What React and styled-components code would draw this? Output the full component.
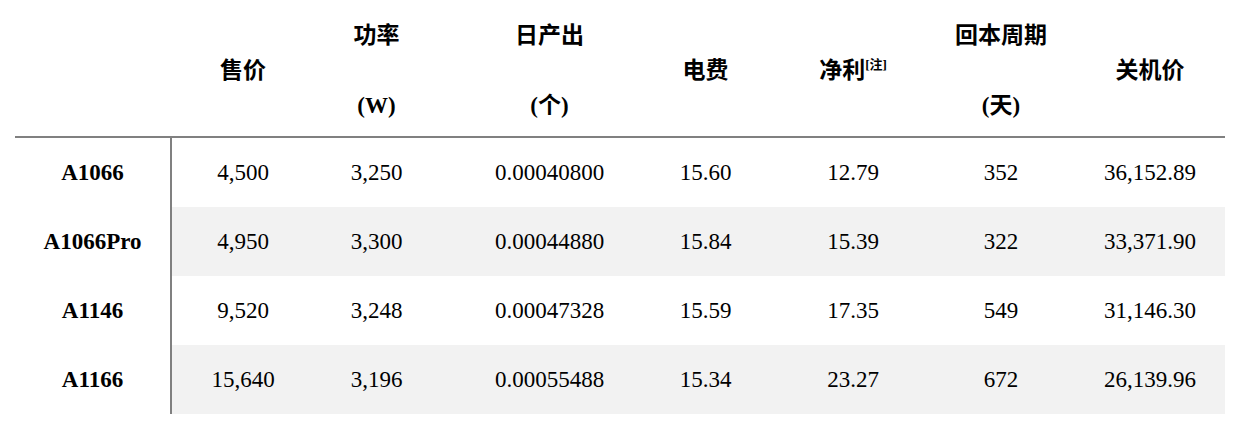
import React from 'react';
import styled, { createGlobalStyle } from 'styled-components';

const GlobalStyle = createGlobalStyle`
  body {
    margin: 0;
    background: #fff;
    font-family: "Liberation Serif", "Noto Sans CJK SC", serif;
    color: #000;
  }
`;

// column widths, and how far the text sits off the column centre
const columns = [
  { w: 157, shift: 0 },
  { w: 138, shift: 2 },
  { w: 153, shift: -10 },
  { w: 165, shift: 4 },
  { w: 151, shift: 2 },
  { w: 148, shift: 0 },
  { w: 148, shift: 0 },
  { w: 150, shift: 0 },
];

const template = columns.map(c => `${c.w}px`).join(' ');

const Table = styled.div`
  width: 1210px;
  margin-left: 15px;
`;

const HeaderRow = styled.div`
  display: grid;
  grid-template-columns: ${template};
  height: 136px;
  border-bottom: 2px solid #808080;
`;

const HeadCell = styled.div`
  display: flex;
  flex-direction: column;
  align-items: center;
  justify-content: center;
  padding-top: 4px;
  padding-left: ${p => Math.max(0, p.$shift * 2)}px;
  padding-right: ${p => Math.max(0, -p.$shift * 2)}px;
  font-family: "Liberation Serif", "Noto Sans CJK SC", sans-serif;
  font-size: 23px;
  font-weight: 700;
  line-height: 35px;
  white-space: nowrap;
`;

const Sup = styled.sup`
  font-size: 13px;
  line-height: 0;
  vertical-align: 9px;
`;

const Row = styled.div`
  display: grid;
  grid-template-columns: ${template};
  height: 69px;
`;

const NameCell = styled.div`
  display: flex;
  align-items: center;
  justify-content: center;
  border-right: 2px solid #808080;
  font-size: 23px;
  font-weight: 700;
`;

const Cell = styled.div`
  display: flex;
  align-items: center;
  justify-content: center;
  padding-left: ${p => Math.max(0, p.$shift * 2)}px;
  padding-right: ${p => Math.max(0, -p.$shift * 2)}px;
  background: ${p => (p.$shaded ? '#f2f2f2' : '#fff')};
  font-size: 23px;
`;

const Blank = styled.span`
  display: block;
  height: 35px;
`;

const headers = [
  { lines: [] },
  { lines: ['售价'] },
  { lines: ['功率', null, '(W)'] },
  { lines: ['日产出', null, '(个)'] },
  { lines: ['电费'] },
  { lines: ['净利'], note: '[注]' },
  { lines: ['回本周期', null, '(天)'] },
  { lines: ['关机价'] },
];

const rows = [
  ['A1066', '4,500', '3,250', '0.00040800', '15.60', '12.79', '352', '36,152.89'],
  ['A1066Pro', '4,950', '3,300', '0.00044880', '15.84', '15.39', '322', '33,371.90'],
  ['A1146', '9,520', '3,248', '0.00047328', '15.59', '17.35', '549', '31,146.30'],
  ['A1166', '15,640', '3,196', '0.00055488', '15.34', '23.27', '672', '26,139.96'],
];

export default function App() {
  return (
    <>
      <GlobalStyle />
      <Table>
        <HeaderRow>
          {headers.map((h, i) => (
            <HeadCell key={i} $shift={columns[i].shift}>
              {h.lines.map((line, j) =>
                line === null ? (
                  <Blank key={j} />
                ) : (
                  <span key={j}>
                    {line}
                    {h.note && <Sup>{h.note}</Sup>}
                  </span>
                )
              )}
            </HeadCell>
          ))}
        </HeaderRow>
        {rows.map((r, i) => (
          <Row key={r[0]}>
            <NameCell>{r[0]}</NameCell>
            {r.slice(1).map((v, j) => (
              <Cell key={j} $shaded={i % 2 === 1} $shift={columns[j + 1].shift}>
                {v}
              </Cell>
            ))}
          </Row>
        ))}
      </Table>
    </>
  );
}
